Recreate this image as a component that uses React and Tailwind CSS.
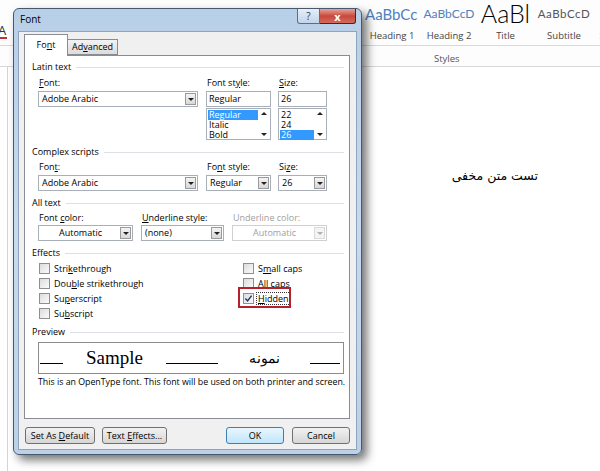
import React from 'react';

// small black dropdown triangle
const Tri = ({ up, dim }) => (
  <span
    className={`block h-0 w-0 border-x-[3px] border-x-transparent ${up ? 'border-b-[3px]' : 'border-t-[3px]'} ${dim ? (up ? 'border-b-[#b0b0b0]' : 'border-t-[#b0b0b0]') : up ? 'border-b-[#222]' : 'border-t-[#222]'}`}
  />
);

const Combo = ({ value, className, center, disabled }) => (
  <div
    className={`flex h-[16px] items-stretch border bg-white ${disabled ? 'border-[#d0d0d0] text-[#a0a0a0]' : 'border-[#a9afb8] text-black'} ${className}`}
  >
    <span className={`flex-1 truncate pl-[3px] leading-[14px] ${center ? 'text-center' : ''}`}>{value}</span>
    <span
      className={`m-[1px] flex w-[11px] items-center justify-center border ${disabled ? 'border-[#dadada] bg-[#f4f4f4]' : 'border-[#9a9a9a] bg-gradient-to-b from-[#f4f4f4] to-[#d8d8d8]'}`}
    >
      <Tri dim={disabled} />
    </span>
  </div>
);

const Group = ({ title }) => (
  <div className="flex h-[12px] items-center pr-[5px]">
    <span className="leading-[12px] text-black">{title}</span>
    <span className="ml-[5px] h-px flex-1 bg-[#dcdfe3]" />
  </div>
);

const Label = ({ children, className, dim }) => (
  <div className={`h-[12px] leading-[12px] ${dim ? 'text-[#a0a0a0]' : 'text-black'} ${className || ''}`}>{children}</div>
);

const ListBox = ({ items, selected, className }) => (
  <div className={`flex h-[32px] border border-[#a9afb8] bg-white ${className}`}>
    <div className="flex-1 pt-[1px]">
      {items.map((it) => (
        <div
          key={it}
          className={`ml-[1px] h-[10px] pl-[1px] leading-[10px] ${it === selected ? 'bg-[#3399ff] text-white' : 'text-black'}`}
        >
          {it}
        </div>
      ))}
    </div>
    <div className="flex w-[12px] flex-col items-center justify-between py-[3px]">
      <Tri up />
      <Tri />
    </div>
  </div>
);

const Check = ({ label, u, checked }) => {
  const i = label.indexOf(u);
  return (
    <div className="flex h-[15px] items-center">
      <span className="flex h-[11px] w-[11px] items-center justify-center border border-[#8e8f8f] bg-gradient-to-br from-[#dcdcdc] to-[#fbfbfb]">
        {checked && (
          <svg width="9" height="9" viewBox="0 0 9 9">
            <path d="M1.4 4.6 L3.6 6.9 L7.6 1.6" fill="none" stroke="#1f3a6b" strokeWidth="1.5" />
          </svg>
        )}
      </span>
      <span className={`ml-[2px] px-[1px] leading-[11px] ${checked ? 'border border-dotted border-[#333]' : 'border border-transparent'}`}>
        {label.slice(0, i)}
        <span className="underline">{u}</span>
        {label.slice(i + 1)}
      </span>
    </div>
  );
};

const Btn = ({ children, className, primary }) => (
  <div
    className={`flex h-[17px] items-center justify-center rounded-[3px] border ${primary ? 'border-[#3c7fb1] bg-gradient-to-b from-[#eaf6fd] to-[#bee6fd]' : 'border-[#707070] bg-gradient-to-b from-[#f2f2f2] to-[#d6d6d6]'} text-black ${className}`}
  >
    <span>{children}</span>
  </div>
);

const GalleryItem = ({ sample, label, sampleClass, w }) => (
  <div className={`flex shrink-0 flex-col items-center ${w}`}>
    <div className={`flex h-[26px] items-end whitespace-nowrap ${sampleClass}`}>{sample}</div>
    <div className="mt-[4px] whitespace-nowrap text-[9.5px] leading-[12px] text-[#444]">{label}</div>
  </div>
);

export default function App() {
  return (
    <div className="relative h-[471px] w-[600px] overflow-hidden bg-white font-['Open_Sans',sans-serif]">
      {/* Word window behind */}
      <div className="flex h-full flex-col">
        <div className="flex h-[46px] border-b border-[#d8d8d8] bg-[#fdfdfd]">
          <div className="relative w-[364px] shrink-0">
            <span className="absolute left-[-2px] top-[24px] text-[13px] leading-[13px] text-[#333]">A</span>
            <span className="absolute left-0 top-[37px] h-[2px] w-[7px] bg-[#c0303a]" />
          </div>
          <GalleryItem w="w-[56px]" sample="AaBbCc" label="Heading 1" sampleClass="text-[15px] leading-[20px] text-[#4f81bd] font-['Lato',sans-serif] pb-[2px] overflow-hidden w-[54px]" />
          <GalleryItem w="w-[58px]" sample="AaBbCcD" label="Heading 2" sampleClass="text-[12px] leading-[16px] text-[#4f81bd] font-['Lato',sans-serif] pb-[4px]" />
          <GalleryItem w="w-[55px]" sample="AaBl" label="Title" sampleClass="text-[25px] leading-[26px] text-black font-['Lato',sans-serif] font-light" />
          <GalleryItem w="w-[62px]" sample="AaBbCcD" label="Subtitle" sampleClass="text-[11.5px] leading-[16px] text-[#555] font-['Lato',sans-serif] pb-[4px] tracking-[0.5px]" />
          <GalleryItem w="w-[20px]" sample="A" label="Su" sampleClass="text-[12px] leading-[16px] text-[#555] pb-[4px]" />
        </div>
        <div className="flex h-[21px] border-b border-[#d8d8d8] bg-[#fdfdfd]">
          <div className="w-[434px] shrink-0" />
          <span className="text-[9.5px] leading-[26px] text-[#555]">Styles</span>
        </div>
        <div className="flex flex-1">
          <div className="w-[8px] shrink-0 border-r border-[#d4d4d4]" />
          <div className="flex-1 pr-[62px] pt-[95px]" dir="rtl">
            <span className="font-['DejaVu_Sans',sans-serif] text-[12.5px] leading-[20px] text-black">تست متن مخفی</span>
          </div>
        </div>
      </div>

      {/* Font dialog */}
      <div className="absolute left-[13px] top-[8px] flex h-[447px] w-[349px] flex-col rounded-[6px] border border-[#47586f] bg-gradient-to-b from-[#b8cfe8] via-[#c7daef] to-[#bcd1e8] text-[9px] shadow-[5px_5px_10px_rgba(0,0,0,0.55)]">
        {/* title bar */}
        <div className="flex h-[22px] shrink-0 items-start">
          <span className="ml-[6px] mt-[4px] text-[10px] leading-[12px] text-black">Font</span>
          <div className="flex-1" />
          <div className="flex h-[15px] w-[23px] items-center justify-center rounded-bl-[3px] border border-t-0 border-[#5c6f88] bg-gradient-to-b from-[#e6eef8] to-[#c3d4ea] text-[10px] leading-[10px] text-[#25364b]">
            ?
          </div>
          <div className="mr-[5px] flex h-[15px] w-[36px] items-center justify-center rounded-br-[3px] border border-l-0 border-t-0 border-[#4a2424] bg-gradient-to-b from-[#e5a39a] via-[#c7483c] to-[#d26b5b] text-[11px] font-bold leading-[11px] text-white">
            x
          </div>
        </div>
        {/* client area */}
        <div className="mx-[4px] mb-[4px] flex flex-1 flex-col border border-[#8ea3bd] bg-[#f0f0f0] pl-[5px] pr-[6px] pt-[2px]">
          {/* tabs */}
          <div className="flex h-[21px] items-end">
            <div className="relative z-10 mb-[-1px] flex h-[22px] w-[44px] items-center justify-center border border-b-0 border-[#898c95] bg-white pb-[2px]">
              <span>
                Fo<span className="underline">n</span>t
              </span>
            </div>
            <div className="flex h-[16px] w-[50px] items-center justify-center border border-l-0 border-[#898c95] bg-gradient-to-b from-[#f3f3f3] to-[#dcdcdc]">
              <span>
                Ad<span className="underline">v</span>anced
              </span>
            </div>
          </div>
          {/* tab panel */}
          <div className="h-[364px] border border-[#898c95] bg-white pl-[7px] pt-[5px]">
            <Group title="Latin text" />
            <div className="ml-[6px] mt-[4px] flex">
              <div className="w-[160px]">
                <Label className="pl-[1px]">
                  <span className="underline">F</span>ont:
                </Label>
                <Combo className="mt-[2px] w-[160px]" value="Adobe Arabic" />
              </div>
              <div className="ml-[8px] w-[65px]">
                <Label className="pl-[1px]">
                  Font st<span className="underline">y</span>le:
                </Label>
                <div className="mt-[2px] h-[16px] border border-[#a9afb8] pl-[2px] leading-[14px]">Regular</div>
                <ListBox className="mt-[1px]" items={['Regular', 'Italic', 'Bold']} selected="Regular" />
              </div>
              <div className="ml-[7px] w-[49px]">
                <Label className="pl-[1px]">
                  <span className="underline">S</span>ize:
                </Label>
                <div className="mt-[2px] h-[16px] border border-[#a9afb8] pl-[2px] leading-[14px]">26</div>
                <ListBox className="mt-[1px]" items={['22', '24', '26']} selected="26" />
              </div>
            </div>

            <div className="mt-[6px]">
              <Group title="Complex scripts" />
            </div>
            <div className="ml-[6px] mt-[3px] flex">
              <div className="w-[160px]">
                <Label className="pl-[1px]">
                  Fon<span className="underline">t</span>:
                </Label>
                <Combo className="mt-[2px] w-[160px]" value="Adobe Arabic" />
              </div>
              <div className="ml-[8px] w-[65px]">
                <Label className="pl-[1px]">
                  Fo<span className="underline">n</span>t style:
                </Label>
                <Combo className="mt-[2px] w-[65px]" value="Regular" />
              </div>
              <div className="ml-[7px] w-[49px]">
                <Label className="pl-[1px]">
                  Si<span className="underline">z</span>e:
                </Label>
                <Combo className="mt-[2px] w-[49px]" value="26" />
              </div>
            </div>

            <div className="mt-[6px]">
              <Group title="All text" />
            </div>
            <div className="ml-[6px] mt-[3px] flex">
              <div className="w-[95px]">
                <Label className="pl-[1px]">
                  Font <span className="underline">c</span>olor:
                </Label>
                <Combo className="mt-[1px] w-[95px]" value="Automatic" center />
              </div>
              <div className="ml-[8px] w-[83px]">
                <Label className="pl-[1px]">
                  <span className="underline">U</span>nderline style:
                </Label>
                <Combo className="mt-[1px] w-[83px]" value="(none)" />
              </div>
              <div className="ml-[8px] w-[95px]">
                <Label className="pl-[1px]" dim>
                  Underline color:
                </Label>
                <Combo className="mt-[1px] w-[95px]" value="Automatic" center disabled />
              </div>
            </div>

            <div className="mt-[6px]">
              <Group title="Effects" />
            </div>
            <div className="ml-[7px] mt-[2px] flex">
              <div className="w-[204px]">
                <Check label="Strikethrough" u="k" />
                <Check label="Double strikethrough" u="b" />
                <Check label="Superscript" u="p" />
                <Check label="Subscript" u="b" />
              </div>
              <div>
                <Check label="Small caps" u="m" />
                <Check label="All caps" u="A" />
                <div className="relative">
                  <Check label="Hidden" u="H" checked />
                  <span className="absolute left-[-5px] top-[-4px] h-[21px] w-[53px] border-2 border-[#b3212c]" />
                </div>
              </div>
            </div>

            <div className="mt-[5px]">
              <Group title="Preview" />
            </div>
            <div className="ml-[6px] mr-[5px] mt-[4px] flex h-[32px] items-end border border-[#8c8c8c] pb-[9px]">
              <span className="ml-[1px] h-px w-[23px] bg-black" />
              <span className="relative top-[3px] ml-[23px] font-['Liberation_Serif',serif] text-[19px] leading-[18px] text-black">Sample</span>
              <span className="ml-[23px] h-px w-[52px] bg-black" />
              <span className="relative top-[3px] ml-[31px] font-['DejaVu_Serif',serif] text-[14px] leading-[18px] text-black">نمونه</span>
              <span className="ml-[30px] h-px w-[30px] bg-black" />
            </div>
            <div className="ml-[6px] mt-[3px] whitespace-nowrap text-[8.8px] leading-[11px] text-black">
              This is an OpenType font. This font will be used on both printer and screen.
            </div>
          </div>
          {/* buttons */}
          <div className="mt-[8px] flex">
            <Btn className="ml-[1px] w-[70px]">
              Set As <span className="underline">D</span>efault
            </Btn>
            <Btn className="ml-[7px] w-[65px]">
              Text <span className="underline">E</span>ffects...
            </Btn>
            <div className="flex-1" />
            <Btn className="w-[58px]" primary>
              OK
            </Btn>
            <Btn className="ml-[8px] w-[58px]">Cancel</Btn>
          </div>
        </div>
      </div>
    </div>
  );
}
